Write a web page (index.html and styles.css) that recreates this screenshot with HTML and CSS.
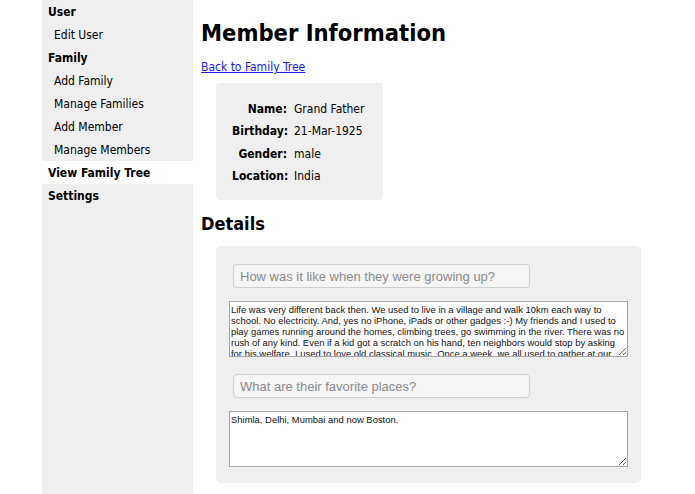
FILE: index.html
```html
<!DOCTYPE html>
<html lang="en">
<head>
<meta charset="utf-8">
<title>Member Information</title>
<link rel="stylesheet" href="styles.css">
</head>
<body>
<div class="layout">
  <nav class="sidebar">
    <div class="nav-head">User</div>
    <div class="nav-item">Edit User</div>
    <div class="nav-head">Family</div>
    <div class="nav-item">Add Family</div>
    <div class="nav-item">Manage Families</div>
    <div class="nav-item">Add Member</div>
    <div class="nav-item">Manage Members</div>
    <div class="nav-head active">View Family Tree</div>
    <div class="nav-head">Settings</div>
  </nav>
  <main class="main">
    <h1 class="title">Member Information</h1>
    <a class="back" href="#">Back to Family Tree</a>
    <div class="info-card">
      <div class="info-label">Name:</div><div class="info-value">Grand Father</div>
      <div class="info-label">Birthday:</div><div class="info-value">21-Mar-1925</div>
      <div class="info-label">Gender:</div><div class="info-value">male</div>
      <div class="info-label">Location:</div><div class="info-value">India</div>
    </div>
    <h2 class="subtitle">Details</h2>
    <div class="details-card">
      <input class="question" type="text" placeholder="How was it like when they were growing up?">
      <textarea class="answer">Life was very different back then. We used to live in a village and walk 10km each way to school. No electricity. And, yes no iPhone, iPads or other gadges :-) My friends and I used to play games running around the homes, climbing trees, go swimming in the river. There was no rush of any kind. Even if a kid got a scratch on his hand, ten neighbors would stop by asking for his welfare. I used to love old classical music. Once a week, we all used to gather at our</textarea>
      <input class="question" type="text" placeholder="What are their favorite places?">
      <textarea class="answer">Shimla, Delhi, Mumbai and now Boston.</textarea>
    </div>
  </main>
</div>
</body>
</html>
```

FILE: styles.css
```css
html, body {
  margin: 0;
  padding: 0;
  background: #ffffff;
}

body {
  font-family: "DejaVu Sans Condensed", "DejaVu Sans", Verdana, sans-serif;
  font-stretch: condensed;
  color: #000;
}

.layout {
  display: flex;
  align-items: stretch;
  min-height: 494px;
  padding-left: 42px;
  gap: 8px;
}

.sidebar {
  width: 151px;
  flex: none;
  background: #efefef;
  min-height: 494px;
  font-size: 12px;
}

.nav-head,
.nav-item {
  height: 23px;
  line-height: 24px;
  white-space: nowrap;
}

.nav-head {
  font-weight: bold;
  padding-left: 6px;
}

.nav-item {
  padding-left: 12px;
}

.nav-head.active {
  background: #ffffff;
}

.main {
  flex: 1;
  display: flex;
  flex-direction: column;
  align-items: flex-start;
}

.title {
  margin: 18px 0 0;
  font-size: 23.5px;
  line-height: 30px;
  font-weight: bold;
}

.back {
  margin-top: 11px;
  font-size: 12px;
  line-height: 16px;
  color: #1a1aee;
}

.info-card {
  margin: 8px 0 0 15px;
  width: 167px;
  box-sizing: border-box;
  padding: 15px 6px 13px 16px;
  background: #efefef;
  border-radius: 4px;
  display: grid;
  grid-template-columns: 55px auto;
  column-gap: 7px;
  font-size: 12px;
  line-height: 22.3px;
}

.info-label {
  font-weight: bold;
  text-align: right;
  white-space: nowrap;
}

.info-value {
  white-space: nowrap;
}

.subtitle {
  margin: 12px 0 0;
  font-size: 18px;
  line-height: 24px;
  font-weight: bold;
}

.details-card {
  margin: 10px 0 0 15px;
  width: 425px;
  box-sizing: border-box;
  padding: 18px 13px 16px;
  background: #efefef;
  border-radius: 5px;
  display: flex;
  flex-direction: column;
  align-items: flex-start;
}

.question {
  margin: 0 0 13px 4px;
  width: 297px;
  height: 24px;
  box-sizing: border-box;
  padding: 0 6px;
  border: 1px solid #cfcfcf;
  border-radius: 4px;
  background: #f5f5f5;
  font-family: "Liberation Sans", Arial, sans-serif;
  font-size: 13px;
  outline: none;
}

.question::placeholder {
  color: #8c8c8c;
}

.answer {
  margin: 0 0 17px;
  width: 399px;
  height: 56px;
  box-sizing: border-box;
  padding: 2px 0 2px 1px;
  border: 1px solid #a6a6a6;
  background: #fff;
  font-family: "Liberation Sans", Arial, sans-serif;
  font-size: 9.45px;
  line-height: 11px;
  color: #111;
  overflow: hidden;
}

.answer:last-child {
  margin-bottom: 0;
}
```
